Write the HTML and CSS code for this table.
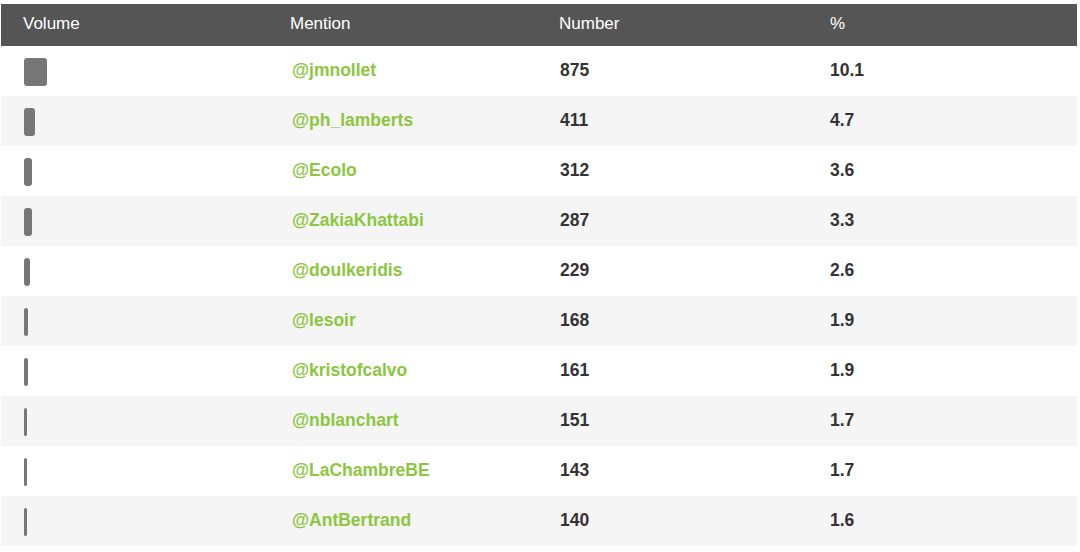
FILE: index.html
```html
<!DOCTYPE html>
<html>
<head>
<meta charset="utf-8">
<link rel="stylesheet" href="styles.css">
</head>
<body>
<div class="wrap">
<table class="mentions">
<thead>
<tr><th>Volume</th><th>Mention</th><th>Number</th><th>%</th></tr>
</thead>
<tbody>
<tr><td><span class="bar" style="width:23px"></span></td><td class="name">@jmnollet</td><td>875</td><td>10.1</td></tr>
<tr><td><span class="bar" style="width:10.8px"></span></td><td class="name">@ph_lamberts</td><td>411</td><td>4.7</td></tr>
<tr><td><span class="bar" style="width:8.2px"></span></td><td class="name">@Ecolo</td><td>312</td><td>3.6</td></tr>
<tr><td><span class="bar" style="width:7.5px"></span></td><td class="name">@ZakiaKhattabi</td><td>287</td><td>3.3</td></tr>
<tr><td><span class="bar" style="width:6px"></span></td><td class="name">@doulkeridis</td><td>229</td><td>2.6</td></tr>
<tr><td><span class="bar" style="width:4.4px"></span></td><td class="name">@lesoir</td><td>168</td><td>1.9</td></tr>
<tr><td><span class="bar" style="width:4.2px"></span></td><td class="name">@kristofcalvo</td><td>161</td><td>1.9</td></tr>
<tr><td><span class="bar" style="width:3px"></span></td><td class="name">@nblanchart</td><td>151</td><td>1.7</td></tr>
<tr><td><span class="bar" style="width:3px"></span></td><td class="name">@LaChambreBE</td><td>143</td><td>1.7</td></tr>
<tr><td><span class="bar" style="width:3px"></span></td><td class="name">@AntBertrand</td><td>140</td><td>1.6</td></tr>
</tbody>
</table>
</div>
</body>
</html>
```
FILE: styles.css
```css
html, body {
  margin: 0;
  padding: 0;
  background: #fff;
}
.wrap {
  padding: 4px 3px 0 1px;
}
.mentions {
  width: 1076px;
  border-collapse: collapse;
  table-layout: fixed;
  font-family: "Liberation Sans", Arial, sans-serif;
}
.mentions th {
  background: #555555;
  color: #ffffff;
  font-weight: normal;
  font-size: 17px;
  text-align: left;
  height: 42px;
  padding: 0 0 3px 22px;
  box-sizing: border-box;
  vertical-align: middle;
}
.mentions th:nth-child(2) { padding-left: 20px; }
.mentions th:nth-child(3) { padding-left: 20px; }
.mentions td {
  height: 50px;
  padding: 0 0 2px 22px;
  box-sizing: border-box;
  font-size: 17.5px;
  font-weight: bold;
  color: #333333;
  vertical-align: middle;
}
.mentions td:nth-child(3) { padding-left: 21px; }
.mentions tbody tr:nth-child(even) td {
  background: #f5f5f5;
}
.mentions td.name {
  color: #8cc63f;
}
.mentions td:first-child {
  padding-left: 23px;
  padding-bottom: 0;
}
.bar {
  display: block;
  height: 28px;
  background: #777777;
  border-radius: 3px;
  margin-top: 1px;
}
```
